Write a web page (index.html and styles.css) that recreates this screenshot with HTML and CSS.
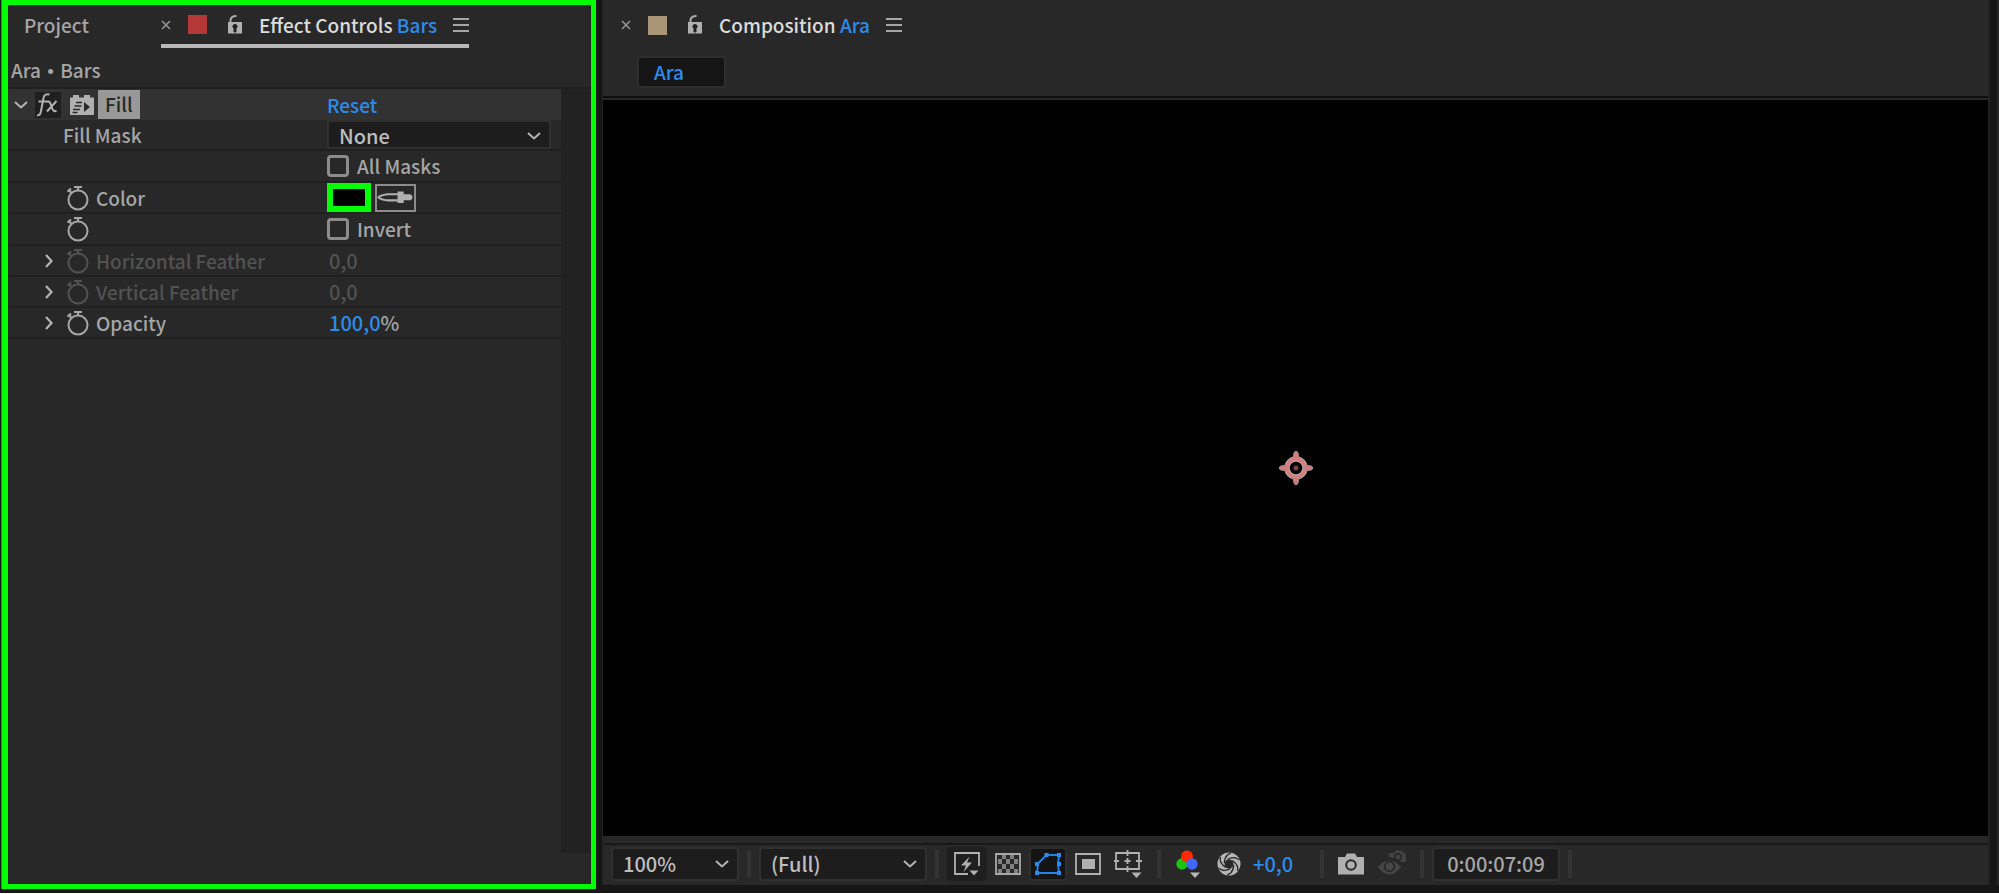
FILE: index.html
```html
<!DOCTYPE html>
<html lang="en">
<head>
    <meta charset="UTF-8">
    <meta name="viewport" content="width=device-width, initial-scale=1.0">
    <title>Effect Controls</title>
    <link rel="stylesheet" href="styles.css">
</head>
<body>
    <svg class="symbols" aria-hidden="true">
        <symbol id="close" viewBox="0 0 10 10"><path d="M1 1l8 8M9 1l-8 8" stroke="#999" stroke-width="1.5"/></symbol>
        <symbol id="lock" viewBox="0 0 16 20">
            <path d="M3.500 8V5.500C3.500 2.500 5.500 1 9.500 1" fill="none" stroke="#aaa" stroke-width="2"/>
            <path d="M1 7h14v11.500H1z" fill="#b0b0b0"/>
            <path d="M8 9.500a2 2 0 0 1 1 3.800V17H7v-3.700a2 2 0 0 1 1-3.800z" fill="#222" stroke="#222"/>
        </symbol>
        <symbol id="menu" viewBox="0 0 16 14"><path d="M0 1h16M0 7h16M0 13h16" stroke="#a6a6a6" stroke-width="2"/></symbol>
        <symbol id="down" viewBox="0 0 14 8"><path d="M1 1l6 5.500L13 1" fill="none" stroke="#b4b4b4" stroke-width="2"/></symbol>
        <symbol id="right" viewBox="0 0 8 14"><path d="M1 1l5.500 6L1 13" fill="none" stroke="#b4b4b4" stroke-width="2.200"/></symbol>
        <symbol id="watch" viewBox="0 0 22 26">
            <g fill="none" stroke="currentColor" stroke-width="2">
                <circle cx="11" cy="15" r="9.500"/>
                <path d="M7 2h8M11 2v4M1.500 4.500l3 3.500M0.500 6.500l3.500-3" stroke-width="2.200"/>
            </g>
        </symbol>
    </svg>

    <div class="workspace">
        <section class="panel controls">
            <header class="tabs">
                <button class="tab project">Project</button>
                <div class="tab active">
                    <button class="icon-btn" aria-label="Close"><svg class="close"><use href="#close"/></svg></button>
                    <span class="swatch red"></span>
                    <button class="icon-btn" aria-label="Lock"><svg class="lock"><use href="#lock"/></svg></button>
                    <span class="tab-title">Effect Controls <em>Bars</em></span>
                    <button class="icon-btn" aria-label="Menu"><svg class="menu"><use href="#menu"/></svg></button>
                </div>
            </header>
            <div class="path">Ara <span class="dot">•</span> Bars</div>

            <div class="effects">
                <div class="list">
                    <div class="row head">
                        <div class="name">
                            <svg class="chev-down"><use href="#down"/></svg>
                            <button class="fx" aria-label="Toggle effect">
                                <svg viewBox="0 0 26 26" fill="none" stroke="#b0b0b0" stroke-width="2">
                                    <path d="M2 23c2.500 1 3.500-1 4-4L8.500 6C9 3 11 1.500 14.500 2.500M3.500 9.500h9M12 10c2.500-1.500 3.500 1 4.500 4.500s2.500 6 5 4M21.500 9l-9.500 10.500"/>
                                </svg>
                            </button>
                            <svg class="brick" viewBox="0 0 24 22">
                                <path d="M1 3.500h2V1h6v2.500h5V1h6v2.500h3q1 0 1 1V20q0 1-1 1H1q-1 0-1-1V4.500q0-1 1-1z" fill="#b0b0b0"/>
                                <path d="M6 8.500h6M4.500 12h7M3 15.500h7M2.500 18.500h5" stroke="#2a2a2a" stroke-width="1.500"/>
                                <path d="M14 8l6 5-6 5z" fill="#2a2a2a"/>
                            </svg>
                            <span class="effect-name">Fill</span>
                        </div>
                        <div class="value"><button class="link">Reset</button></div>
                    </div>
                    <div class="row">
                        <label class="name plain" for="mask">Fill Mask</label>
                        <div class="value">
                            <div class="select mask">
                                <select id="mask"><option>None</option></select>
                                <svg class="chev-down"><use href="#down"/></svg>
                            </div>
                        </div>
                    </div>
                    <div class="row tall">
                        <div class="name"></div>
                        <div class="value"><label class="check"><input type="checkbox">All Masks</label></div>
                    </div>
                    <div class="row">
                        <div class="name prop"><svg class="watch"><use href="#watch"/></svg><label for="color">Color</label></div>
                        <div class="value">
                            <button class="color" id="color" aria-label="Color"></button>
                            <button class="dropper" aria-label="Pick color">
                                <svg viewBox="0 0 36 20">
                                    <path d="M21 7H10Q3 8 1.500 10q1.500 2 8.500 3h11" fill="none" stroke="#b0b0b0" stroke-width="2"/>
                                    <path d="M20 4.500h6V7h5.500q3 0 3 3t-3 3H26v2.500h-6z" fill="#b0b0b0"/>
                                </svg>
                            </button>
                        </div>
                    </div>
                    <div class="row tall">
                        <div class="name prop"><svg class="watch"><use href="#watch"/></svg></div>
                        <div class="value"><label class="check"><input type="checkbox">Invert</label></div>
                    </div>
                    <div class="row disabled">
                        <div class="name prop"><svg class="chev-right"><use href="#right"/></svg><svg class="watch"><use href="#watch"/></svg>Horizontal Feather</div>
                        <div class="value number">0,0</div>
                    </div>
                    <div class="row disabled">
                        <div class="name prop"><svg class="chev-right"><use href="#right"/></svg><svg class="watch"><use href="#watch"/></svg>Vertical Feather</div>
                        <div class="value number">0,0</div>
                    </div>
                    <div class="row">
                        <div class="name prop"><svg class="chev-right"><use href="#right"/></svg><svg class="watch"><use href="#watch"/></svg>Opacity</div>
                        <div class="value number"><button class="link">100,0</button>%</div>
                    </div>
                </div>
                <div class="gutter"></div>
            </div>
        </section>

        <section class="panel composition">
            <header class="tabs">
                <div class="tab">
                    <button class="icon-btn" aria-label="Close"><svg class="close"><use href="#close"/></svg></button>
                    <span class="swatch tan"></span>
                    <button class="icon-btn" aria-label="Lock"><svg class="lock"><use href="#lock"/></svg></button>
                    <span class="tab-title">Composition <em>Ara</em></span>
                    <button class="icon-btn" aria-label="Menu"><svg class="menu"><use href="#menu"/></svg></button>
                </div>
            </header>
            <nav class="crumbs"><button class="crumb">Ara</button></nav>

            <div class="viewer">
                <svg class="anchor" viewBox="0 0 36 36">
                    <circle cx="18" cy="18" r="9" fill="none" stroke="#a9a9a9" stroke-width="5.500"/>
                    <path d="M15 8l1-5.500q2-3 4 0L21 8zM15 28l1 5.500q2 3 4 0l1-5.500zM8 15l-5.500 1q-3 2 0 4L8 21zM28 15l5.500 1q3 2 0 4L28 21z" fill="#d07c7c" stroke="#958585"/>
                    <circle cx="18" cy="18" r="9" fill="none" stroke="#d87d7d" stroke-width="3.500"/>
                    <circle cx="18" cy="18" r="2.500" fill="#7d4646"/>
                </svg>
            </div>

            <footer class="toolbar">
                <div class="select zoom">
                    <select aria-label="Magnification"><option>100%</option></select>
                    <svg class="chev-down"><use href="#down"/></svg>
                </div>
                <span class="sep"></span>
                <div class="select quality">
                    <select aria-label="Resolution"><option>(Full)</option></select>
                    <svg class="chev-down"><use href="#down"/></svg>
                </div>
                <span class="sep"></span>
                <button class="tool wide dark" aria-label="Fast previews">
                    <svg width="28" height="24" viewBox="0 0 28 24">
                        <path d="M15 22H2V1h24v13" fill="none" stroke="#b0b0b0" stroke-width="1.800"/>
                        <path d="M16.500 4.500L8 13.500h5L10.500 20l8.500-9.500h-5z" fill="#b0b0b0"/>
                        <path d="M16.500 18.500h9L21 23.500z" fill="#b0b0b0"/>
                    </svg>
                </button>
                <button class="tool" aria-label="Transparency grid">
                    <svg width="26" height="22" viewBox="0 0 26 22">
                        <path d="M1 1h24v20H1z" fill="#2a2a2a" stroke="#a8a8a8" stroke-width="1.800"/>
                        <path d="M7 2h4v4H7zM15 2h4v4h-4zM3 6h4v5H3zM11 6h4v5h-4zM19 6h4v5h-4zM7 11h4v5H7zM15 11h4v5h-4zM3 16h4v4H3zM11 16h4v4h-4zM19 16h4v4h-4z" fill="#808080"/>
                    </svg>
                </button>
                <button class="tool mid black" aria-label="Mask and shape path">
                    <svg width="28" height="24" viewBox="0 0 28 24">
                        <path d="M3 21l1-9.500L12.500 3H25l-1 9 1 9z" fill="none" stroke="#2680eb" stroke-width="2"/>
                        <path d="M1 19h4v4H1zM1 10h4v4H1zM10.500 1h4v4h-4zM23 1h4v4h-4zM23 10h4v4h-4zM23 19h4v4h-4z" fill="#2d8ceb"/>
                    </svg>
                </button>
                <button class="tool" aria-label="Region of interest">
                    <svg width="26" height="22" viewBox="0 0 26 22">
                        <path d="M1 1h24v20H1z" fill="none" stroke="#b0b0b0" stroke-width="1.800"/>
                        <path d="M7 6h13v10H7z" fill="#b0b0b0"/>
                    </svg>
                </button>
                <button class="tool wide" aria-label="Grid and guides">
                    <svg width="30" height="28" viewBox="0 0 30 28">
                        <g fill="none" stroke="#b0b0b0" stroke-width="1.800">
                            <path d="M2 3h23v16H2z"/>
                            <path d="M13.500 0v6M13.500 16v6M0 11h5M22 11h6M10.500 11h6M13.500 8v6"/>
                        </g>
                        <path d="M17.500 22.500h10l-5 5.500z" fill="#b0b0b0"/>
                    </svg>
                </button>
                <span class="sep"></span>
                <button class="tool wide" aria-label="Channels">
                    <svg width="26" height="28" viewBox="0 0 26 28">
                        <circle cx="6" cy="14" r="5.700" fill="#1bc410"/>
                        <circle cx="11" cy="6.500" r="6" fill="#ff2a00"/>
                        <circle cx="16" cy="14" r="5.700" fill="#4068ff"/>
                        <path d="M14 22.500h10L19 28z" fill="#b8b8b8"/>
                    </svg>
                </button>
                <button class="tool" aria-label="Reset exposure">
                    <svg width="24" height="24" viewBox="0 0 24 24">
                        <circle cx="12" cy="12" r="8" fill="none" stroke="#b4b4b4" stroke-width="7"/>
                        <g fill="none" stroke="#282828" stroke-width="1.300">
                            <path id="blade" d="M10.500 7.500Q15 5 19 6L22.500 8"/>
                            <use href="#blade" transform="rotate(60 12 12)"/>
                            <use href="#blade" transform="rotate(120 12 12)"/>
                            <use href="#blade" transform="rotate(180 12 12)"/>
                            <use href="#blade" transform="rotate(240 12 12)"/>
                            <use href="#blade" transform="rotate(300 12 12)"/>
                        </g>
                    </svg>
                </button>
                <button class="exposure">+0,0</button>
                <span class="sep"></span>
                <button class="tool mid" aria-label="Take snapshot">
                    <svg width="26" height="22" viewBox="0 0 26 22">
                        <path d="M0 4h7l2-3.500h8L19 4h7v17.500H0z" fill="#b0b0b0"/>
                        <circle cx="13" cy="12" r="4.800" fill="none" stroke="#282828" stroke-width="2"/>
                    </svg>
                </button>
                <button class="tool snap" aria-label="Show snapshot" disabled>
                    <svg width="28" height="30" viewBox="0 0 28 30">
                        <path d="M0 18q11-13 23 0-12 15-23 0z" fill="#464646"/>
                        <circle cx="11.500" cy="17.500" r="4.800" fill="#464646" stroke="#282828" stroke-width="1.800"/>
                        <path d="M11 4h5l2-2.500h6L25 4h3v9h-5l-3-3-9-2z" fill="#424242"/>
                        <circle cx="20" cy="8" r="3.200" fill="#424242" stroke="#282828" stroke-width="1.500"/>
                    </svg>
                </button>
                <span class="sep"></span>
                <button class="time">0:00:07:09</button>
                <span class="sep"></span>
            </footer>
        </section>

        <div class="panel next"></div>
    </div>
</body>
</html>
```
FILE: styles.css
```css
* {
    box-sizing: border-box;
}
body {
    margin: 0;
    background-color: #fff;
    color: #a6a6a6;
    font-family: "Noto Sans CJK SC", "Noto Sans", sans-serif;
    font-size: 19px;
    font-weight: 500;
    line-height: 28px;
}
button, select {
    font: inherit;
    color: inherit;
    background: none;
    border: none;
    padding: 0;
    margin: 0;
}
svg {
    display: block;
    flex-shrink: 0;
}
.symbols {
    position: absolute;
    width: 0;
    height: 0;
}
.workspace {
    display: flex;
    height: 100vh;
    padding-left: 2px;
    background-color: #161616;
    border-bottom: 1px solid #fff;
}
.panel {
    display: flex;
    flex-direction: column;
    background-color: #282828;
}

/* tabs */
.tabs {
    display: flex;
    flex-shrink: 0;
}
.tab {
    display: flex;
    align-items: center;
    white-space: nowrap;
}
.icon-btn {
    display: flex;
}
.close {
    width: 10px;
    height: 10px;
}
.lock {
    width: 16px;
    height: 20px;
}
.menu {
    width: 16px;
    height: 14px;
}
.swatch {
    width: 19px;
    height: 19px;
    margin: 0 20px 0 17px;
}
.red {
    background-color: #b53838;
}
.tan {
    background-color: #a89676;
}
.tab-title {
    margin: 0 16px;
    color: #dcdcdc;
}
.tab-title em {
    font-style: normal;
    color: #2d8ceb;
}

/* effect controls */
.controls {
    flex: 0 0 594px;
    margin-bottom: 4px;
    border: 5px solid #00ff00;
    border-left-width: 6px;
    box-shadow: -1px 0 #2d6fd0;
}
.controls .tabs {
    height: 43px;
    padding-left: 16px;
    justify-content: flex-start;
    gap: 72px;
}
.active {
    border-bottom: 4px solid #b8b8b8;
}
.project {
    padding-bottom: 4px;
}
.path {
    height: 39px;
    padding: 8px 3px 0;
}
.dot {
    margin: 0 2px;
    font-family: "Liberation Sans", sans-serif;
    line-height: 1;
}
.effects {
    display: flex;
    flex: 1;
    border-top: 2px solid #1f1f1f;
}
.list {
    flex: 1;
}
.gutter {
    width: 30px;
    margin-bottom: 31px;
    background-color: #222;
}
.row {
    display: grid;
    grid-template-columns: 319px 1fr;
    height: 31px;
    border-bottom: 2px solid #202020;
}
.tall {
    height: 32px;
}
.head {
    background-color: #323232;
    border-bottom: none;
}
.name, .value {
    display: flex;
    align-items: center;
    white-space: nowrap;
}
.number {
    padding-left: 2px;
    font-size: 20px;
}
.head .name {
    padding-left: 6px;
}
.plain {
    padding-left: 55px;
}
.prop {
    padding-left: 37px;
}
.chev-down {
    width: 14px;
    height: 8px;
}
.chev-right {
    width: 8px;
    height: 14px;
}
.watch {
    width: 22px;
    height: 26px;
    margin: 0 7px 0 22px;
}
.chev-right + .watch {
    margin-left: 14px;
}
.fx {
    width: 26px;
    height: 26px;
    margin: 0 9px 0 7px;
    background-color: #1f1f1f;
}
.brick {
    width: 24px;
    height: 22px;
}
.effect-name {
    height: 29px;
    margin-left: 4px;
    padding: 0 7px;
    background-color: #989898;
    color: #282828;
}
.link, .exposure {
    color: #2d8ceb;
}
.disabled {
    color: #525252;
}
.select {
    display: grid;
    align-items: center;
    background-color: #1d1d1d;
    border: 2px solid #303030;
    border-radius: 4px;
    color: #bebebe;
    font-size: 20px;
}
.select select {
    grid-area: 1 / 1;
    width: 100%;
    appearance: none;
    padding-left: 10px;
}
.select svg {
    grid-area: 1 / 1;
    justify-self: end;
    margin-right: 8px;
    pointer-events: none;
}
.mask {
    width: 224px;
    height: 29px;
    border-radius: 0;
}
.check {
    display: flex;
    align-items: center;
    gap: 8px;
}
.check input {
    appearance: none;
    width: 22px;
    height: 22px;
    margin: 0;
    border: 3px solid #8c8c8c;
    border-radius: 4px;
}
.color {
    width: 44px;
    height: 29px;
    margin-right: 4px;
    background-color: #000;
    border: 6px solid #00ff00;
}
.dropper {
    width: 41px;
    height: 28px;
    border: 2px solid #8c8c8c;
}

/* composition */
.composition {
    flex: 1;
    min-width: 0;
    margin: 0 7px 8px 6px;
    border: solid #222;
    border-width: 0 2px 0 1px;
}
.composition .tabs {
    height: 48px;
    padding: 2px 18px 0;
}
.crumbs {
    height: 48px;
    padding: 8px 34px;
}
.crumb {
    width: 89px;
    height: 32px;
    padding-left: 15px;
    text-align: left;
    color: #2d8ceb;
    background-color: #151515;
    border: 2px solid #2e2e2e;
    border-radius: 4px;
}
.viewer {
    display: flex;
    flex: 1;
    align-items: center;
    justify-content: center;
    margin: 4px 0 7px;
    background-color: #000;
    box-shadow: 0 -2px #282828, 0 -4px #0f0f0f;
}
.anchor {
    width: 36px;
    height: 36px;
}
.toolbar {
    display: flex;
    align-items: center;
    gap: 8px;
    height: 42px;
    padding: 0 0 2px 8px;
    border-top: 2px solid #191919;
    font-size: 20px;
}
.toolbar > * {
    flex-shrink: 0;
}
.toolbar .select {
    height: 34px;
}
.zoom {
    width: 128px;
}
.quality {
    width: 168px;
}
.sep {
    width: 4px;
    height: 28px;
    background-color: #333;
}
.tool {
    display: flex;
    align-items: center;
    justify-content: center;
    height: 34px;
    border-radius: 4px;
}
.wide {
    width: 40px;
}
.mid {
    width: 38px;
}
.snap {
    width: 34px;
    justify-content: flex-start;
}
.dark {
    background-color: #1f1f1f;
}
.black {
    background-color: #141414;
    border: 2px solid #2e2e2e;
}
.exposure {
    width: 63px;
    padding-left: 4px;
    text-align: left;
}
.time {
    width: 128px;
    height: 34px;
    color: #a6a6a6;
    background-color: #1d1d1d;
    border: 2px solid #303030;
    border-radius: 4px;
}
.next {
    width: 2px;
    margin-bottom: 8px;
}
```
